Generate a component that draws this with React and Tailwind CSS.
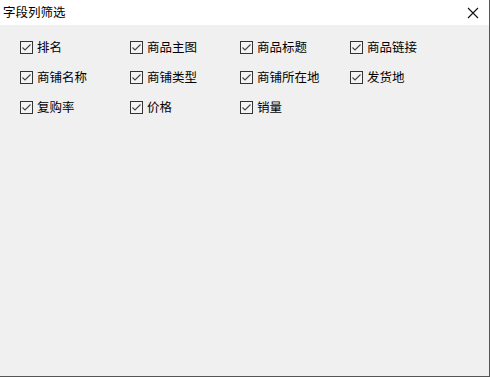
const fields = [
  "排名", "商品主图", "商品标题", "商品链接",
  "商铺名称", "商铺类型", "商铺所在地", "发货地",
  "复购率", "价格", "销量",
];

function Check({ label }) {
  return (
    <label className="flex items-center h-[30px] gap-[4px] text-[12.5px] text-black">
      <span className="w-[13px] h-[13px] border border-[#333] bg-[#f4f4f4] flex items-center justify-center">
        <svg width="11" height="11" viewBox="0 0 11 11">
          <path d="M1.5 5.5 L4 8 L9.5 2.5" fill="none" stroke="#444" strokeWidth="1.1" />
        </svg>
      </span>
      {label}
    </label>
  );
}

export default function App() {
  return (
    <div
      className="w-[490px] h-[377px] bg-[#f0f0f0] border-r border-b border-[#555] flex flex-col"
      style={{ fontFamily: '"Noto Sans CJK SC", "Liberation Sans", sans-serif' }}
    >
      <div className="h-[25px] bg-white flex items-center justify-between pl-[3px] pr-[10px]">
        <span className="text-[12.5px] text-black leading-none">字段列筛选</span>
        <svg width="12" height="12" viewBox="0 0 12 12">
          <path d="M1 1 L11 11 M11 1 L1 11" stroke="#111" strokeWidth="1.1" />
        </svg>
      </div>
      <div className="grid grid-cols-[110px_110px_110px_110px] pl-[20px] pt-[7px]">
        {fields.map((f) => (
          <Check key={f} label={f} />
        ))}
      </div>
    </div>
  );
}
